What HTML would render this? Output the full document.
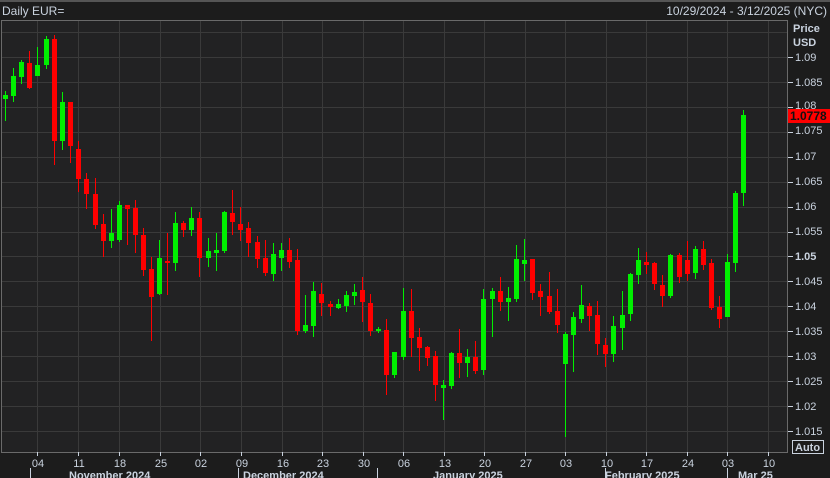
<!DOCTYPE html>
<html><head><meta charset="utf-8"><style>
html,body{margin:0;padding:0;background:#1c1c1c;width:830px;height:478px;overflow:hidden}
svg{display:block;font-family:"Liberation Sans",sans-serif}
</style></head><body>
<svg width="830" height="478" viewBox="0 0 830 478" xmlns="http://www.w3.org/2000/svg">
<rect x="0" y="0" width="830" height="478" fill="#1c1c1c"/>
<rect x="0" y="0" width="830" height="2" fill="#555"/>
<text x="2" y="15" font-size="12" fill="#c9d2de">Daily EUR=</text>
<text x="827" y="15" font-size="12" fill="#c9d2de" text-anchor="end">10/29/2024 - 3/12/2025 (NYC)</text>
<rect x="1.5" y="20.5" width="786" height="432" fill="#222223" stroke="#6a6a6a"/>
<g stroke="#3a3a3a" stroke-width="1">
<line x1="2" x2="787" y1="32.5" y2="32.5"/><line x1="2" x2="787" y1="57.5" y2="57.5"/><line x1="2" x2="787" y1="82.5" y2="82.5"/><line x1="2" x2="787" y1="107.5" y2="107.5"/><line x1="2" x2="787" y1="132.5" y2="132.5"/><line x1="2" x2="787" y1="157.5" y2="157.5"/><line x1="2" x2="787" y1="182.5" y2="182.5"/><line x1="2" x2="787" y1="207.5" y2="207.5"/><line x1="2" x2="787" y1="232.5" y2="232.5"/><line x1="2" x2="787" y1="256.5" y2="256.5"/><line x1="2" x2="787" y1="281.5" y2="281.5"/><line x1="2" x2="787" y1="306.5" y2="306.5"/><line x1="2" x2="787" y1="331.5" y2="331.5"/><line x1="2" x2="787" y1="356.5" y2="356.5"/><line x1="2" x2="787" y1="381.5" y2="381.5"/><line x1="2" x2="787" y1="406.5" y2="406.5"/><line x1="2" x2="787" y1="431.5" y2="431.5"/>
<line y1="21" y2="452" x1="37.5" x2="37.5"/><line y1="21" y2="452" x1="78.5" x2="78.5"/><line y1="21" y2="452" x1="119.5" x2="119.5"/><line y1="21" y2="452" x1="160.5" x2="160.5"/><line y1="21" y2="452" x1="200.5" x2="200.5"/><line y1="21" y2="452" x1="241.5" x2="241.5"/><line y1="21" y2="452" x1="282.5" x2="282.5"/><line y1="21" y2="452" x1="322.5" x2="322.5"/><line y1="21" y2="452" x1="363.5" x2="363.5"/><line y1="21" y2="452" x1="403.5" x2="403.5"/><line y1="21" y2="452" x1="444.5" x2="444.5"/><line y1="21" y2="452" x1="484.5" x2="484.5"/><line y1="21" y2="452" x1="525.5" x2="525.5"/><line y1="21" y2="452" x1="565.5" x2="565.5"/><line y1="21" y2="452" x1="606.5" x2="606.5"/><line y1="21" y2="452" x1="646.5" x2="646.5"/><line y1="21" y2="452" x1="687.5" x2="687.5"/><line y1="21" y2="452" x1="727.5" x2="727.5"/><line y1="21" y2="452" x1="768.5" x2="768.5"/>
</g>
<g fill="#00f000">
<rect x="5" y="91" width="1" height="30"/><rect x="3" y="95" width="5" height="4"/>
<rect x="13" y="68" width="1" height="34"/><rect x="11" y="76" width="5" height="20"/>
<rect x="21" y="60" width="1" height="24"/><rect x="19" y="62" width="5" height="15"/>
<rect x="37" y="47" width="1" height="29"/><rect x="35" y="65" width="5" height="11"/>
<rect x="46" y="36" width="1" height="33"/><rect x="44" y="39" width="5" height="26"/>
<rect x="62" y="92" width="1" height="58"/><rect x="60" y="102" width="5" height="39"/>
<rect x="111" y="209" width="1" height="39"/><rect x="109" y="233" width="5" height="8"/>
<rect x="119" y="201" width="1" height="41"/><rect x="117" y="205" width="5" height="35"/>
<rect x="159" y="240" width="1" height="55"/><rect x="157" y="258" width="5" height="36"/>
<rect x="175" y="212" width="1" height="59"/><rect x="173" y="223" width="5" height="40"/>
<rect x="191" y="207" width="1" height="29"/><rect x="189" y="218" width="5" height="12"/>
<rect x="208" y="238" width="1" height="29"/><rect x="206" y="251" width="5" height="7"/>
<rect x="216" y="233" width="1" height="38"/><rect x="214" y="250" width="5" height="3"/>
<rect x="224" y="211" width="1" height="42"/><rect x="222" y="212" width="5" height="39"/>
<rect x="273" y="243" width="1" height="38"/><rect x="271" y="254" width="5" height="20"/>
<rect x="281" y="243" width="1" height="28"/><rect x="279" y="250" width="5" height="8"/>
<rect x="305" y="295" width="1" height="38"/><rect x="303" y="325" width="5" height="6"/>
<rect x="313" y="282" width="1" height="55"/><rect x="311" y="291" width="5" height="35"/>
<rect x="338" y="299" width="1" height="10"/><rect x="336" y="304" width="5" height="4"/>
<rect x="346" y="291" width="1" height="21"/><rect x="344" y="295" width="5" height="11"/>
<rect x="354" y="284" width="1" height="21"/><rect x="352" y="292" width="5" height="4"/>
<rect x="378" y="327" width="1" height="6"/><rect x="376" y="329" width="5" height="2"/>
<rect x="394" y="352" width="1" height="26"/><rect x="392" y="352" width="5" height="23"/>
<rect x="403" y="288" width="1" height="72"/><rect x="401" y="311" width="5" height="46"/>
<rect x="443" y="380" width="1" height="40"/><rect x="441" y="385" width="5" height="3"/>
<rect x="451" y="352" width="1" height="37"/><rect x="449" y="353" width="5" height="33"/>
<rect x="467" y="349" width="1" height="28"/><rect x="465" y="357" width="5" height="6"/>
<rect x="483" y="289" width="1" height="86"/><rect x="481" y="299" width="5" height="71"/>
<rect x="492" y="288" width="1" height="49"/><rect x="490" y="291" width="5" height="8"/>
<rect x="508" y="287" width="1" height="34"/><rect x="506" y="298" width="5" height="4"/>
<rect x="516" y="245" width="1" height="57"/><rect x="514" y="259" width="5" height="40"/>
<rect x="524" y="239" width="1" height="42"/><rect x="522" y="260" width="5" height="4"/>
<rect x="565" y="332" width="1" height="105"/><rect x="563" y="334" width="5" height="30"/>
<rect x="573" y="312" width="1" height="60"/><rect x="571" y="317" width="5" height="18"/>
<rect x="581" y="285" width="1" height="38"/><rect x="579" y="305" width="5" height="14"/>
<rect x="613" y="316" width="1" height="46"/><rect x="611" y="326" width="5" height="28"/>
<rect x="622" y="291" width="1" height="59"/><rect x="620" y="315" width="5" height="13"/>
<rect x="630" y="273" width="1" height="48"/><rect x="628" y="274" width="5" height="40"/>
<rect x="638" y="248" width="1" height="36"/><rect x="636" y="260" width="5" height="15"/>
<rect x="670" y="254" width="1" height="44"/><rect x="668" y="255" width="5" height="41"/>
<rect x="695" y="246" width="1" height="33"/><rect x="693" y="249" width="5" height="24"/>
<rect x="727" y="254" width="1" height="63"/><rect x="725" y="262" width="5" height="55"/>
<rect x="735" y="191" width="1" height="81"/><rect x="733" y="193" width="5" height="70"/>
<rect x="743" y="110" width="1" height="96"/><rect x="741" y="115" width="5" height="78"/>
</g>
<g fill="#ff0000">
<rect x="29" y="51" width="1" height="38"/><rect x="27" y="63" width="5" height="25"/>
<rect x="54" y="35" width="1" height="130"/><rect x="52" y="39" width="5" height="102"/>
<rect x="70" y="102" width="1" height="61"/><rect x="68" y="102" width="5" height="44"/>
<rect x="78" y="141" width="1" height="51"/><rect x="76" y="149" width="5" height="30"/>
<rect x="86" y="173" width="1" height="36"/><rect x="84" y="179" width="5" height="15"/>
<rect x="95" y="178" width="1" height="51"/><rect x="93" y="194" width="5" height="31"/>
<rect x="103" y="214" width="1" height="43"/><rect x="101" y="224" width="5" height="17"/>
<rect x="127" y="205" width="1" height="40"/><rect x="125" y="205" width="5" height="4"/>
<rect x="135" y="200" width="1" height="53"/><rect x="133" y="208" width="5" height="27"/>
<rect x="143" y="228" width="1" height="48"/><rect x="141" y="235" width="5" height="35"/>
<rect x="151" y="257" width="1" height="84"/><rect x="149" y="269" width="5" height="28"/>
<rect x="167" y="233" width="1" height="62"/><rect x="165" y="261" width="5" height="2"/>
<rect x="183" y="221" width="1" height="16"/><rect x="181" y="223" width="5" height="7"/>
<rect x="199" y="212" width="1" height="65"/><rect x="197" y="218" width="5" height="40"/>
<rect x="232" y="190" width="1" height="45"/><rect x="230" y="213" width="5" height="9"/>
<rect x="240" y="207" width="1" height="34"/><rect x="238" y="224" width="5" height="6"/>
<rect x="248" y="222" width="1" height="35"/><rect x="246" y="228" width="5" height="15"/>
<rect x="257" y="236" width="1" height="32"/><rect x="255" y="242" width="5" height="17"/>
<rect x="265" y="240" width="1" height="36"/><rect x="263" y="258" width="5" height="15"/>
<rect x="289" y="238" width="1" height="30"/><rect x="287" y="250" width="5" height="12"/>
<rect x="297" y="249" width="1" height="86"/><rect x="295" y="260" width="5" height="71"/>
<rect x="321" y="283" width="1" height="33"/><rect x="319" y="294" width="5" height="9"/>
<rect x="330" y="301" width="1" height="15"/><rect x="328" y="304" width="5" height="3"/>
<rect x="362" y="277" width="1" height="45"/><rect x="360" y="290" width="5" height="12"/>
<rect x="370" y="294" width="1" height="42"/><rect x="368" y="303" width="5" height="28"/>
<rect x="386" y="319" width="1" height="76"/><rect x="384" y="330" width="5" height="45"/>
<rect x="411" y="289" width="1" height="68"/><rect x="409" y="311" width="5" height="27"/>
<rect x="419" y="328" width="1" height="43"/><rect x="417" y="337" width="5" height="11"/>
<rect x="427" y="346" width="1" height="20"/><rect x="425" y="347" width="5" height="11"/>
<rect x="435" y="351" width="1" height="50"/><rect x="433" y="356" width="5" height="29"/>
<rect x="459" y="329" width="1" height="49"/><rect x="457" y="353" width="5" height="10"/>
<rect x="475" y="341" width="1" height="33"/><rect x="473" y="357" width="5" height="14"/>
<rect x="500" y="277" width="1" height="34"/><rect x="498" y="291" width="5" height="11"/>
<rect x="532" y="259" width="1" height="41"/><rect x="530" y="259" width="5" height="34"/>
<rect x="540" y="284" width="1" height="32"/><rect x="538" y="291" width="5" height="6"/>
<rect x="549" y="272" width="1" height="42"/><rect x="547" y="296" width="5" height="16"/>
<rect x="557" y="289" width="1" height="44"/><rect x="555" y="311" width="5" height="14"/>
<rect x="589" y="303" width="1" height="28"/><rect x="587" y="306" width="5" height="10"/>
<rect x="597" y="301" width="1" height="54"/><rect x="595" y="315" width="5" height="29"/>
<rect x="605" y="338" width="1" height="29"/><rect x="603" y="345" width="5" height="9"/>
<rect x="646" y="252" width="1" height="22"/><rect x="644" y="262" width="5" height="3"/>
<rect x="654" y="262" width="1" height="28"/><rect x="652" y="263" width="5" height="21"/>
<rect x="662" y="275" width="1" height="32"/><rect x="660" y="285" width="5" height="11"/>
<rect x="679" y="253" width="1" height="30"/><rect x="677" y="255" width="5" height="22"/>
<rect x="687" y="241" width="1" height="40"/><rect x="685" y="260" width="5" height="14"/>
<rect x="703" y="241" width="1" height="29"/><rect x="701" y="249" width="5" height="16"/>
<rect x="711" y="259" width="1" height="51"/><rect x="709" y="263" width="5" height="45"/>
<rect x="719" y="296" width="1" height="32"/><rect x="717" y="307" width="5" height="12"/>
</g>
<g fill="#c9d2de" font-size="11">
<text x="793" y="32" font-weight="bold">Price</text>
<text x="793" y="46" font-weight="bold">USD</text>
<g stroke="#c9d2de"><line x1="788" x2="793" y1="57.5" y2="57.5"/><line x1="788" x2="793" y1="82.5" y2="82.5"/><line x1="788" x2="793" y1="107.5" y2="107.5"/><line x1="788" x2="793" y1="132.5" y2="132.5"/><line x1="788" x2="793" y1="157.5" y2="157.5"/><line x1="788" x2="793" y1="182.5" y2="182.5"/><line x1="788" x2="793" y1="207.5" y2="207.5"/><line x1="788" x2="793" y1="232.5" y2="232.5"/><line x1="788" x2="793" y1="256.5" y2="256.5"/><line x1="788" x2="793" y1="281.5" y2="281.5"/><line x1="788" x2="793" y1="306.5" y2="306.5"/><line x1="788" x2="793" y1="331.5" y2="331.5"/><line x1="788" x2="793" y1="356.5" y2="356.5"/><line x1="788" x2="793" y1="381.5" y2="381.5"/><line x1="788" x2="793" y1="406.5" y2="406.5"/><line x1="788" x2="793" y1="431.5" y2="431.5"/></g>
<text x="795" y="61">1.09</text><text x="795" y="86">1.085</text><text x="795" y="109">1.08</text><text x="795" y="134">1.075</text><text x="795" y="160">1.07</text><text x="795" y="185">1.065</text><text x="795" y="210">1.06</text><text x="795" y="235">1.055</text><text x="795" y="260" font-weight="bold">1.05</text><text x="795" y="285">1.045</text><text x="795" y="310">1.04</text><text x="795" y="335">1.035</text><text x="795" y="360">1.03</text><text x="795" y="385">1.025</text><text x="795" y="410">1.02</text><text x="795" y="435">1.015</text>
</g>
<rect x="788" y="109" width="42" height="14" fill="#ff0000"/>
<text x="790" y="120" font-size="12" font-weight="bold" fill="#111">1.0778</text>
<rect x="792.5" y="440.5" width="31" height="13" fill="#1c1c1c" stroke="#c9d2de"/>
<text x="795" y="451" font-size="11" font-weight="bold" fill="#c9d2de">Auto</text>
<g stroke="#c9d2de">
<line x1="37.5" x2="37.5" y1="452" y2="456"/><line x1="78.5" x2="78.5" y1="452" y2="456"/><line x1="119.5" x2="119.5" y1="452" y2="456"/><line x1="160.5" x2="160.5" y1="452" y2="456"/><line x1="200.5" x2="200.5" y1="452" y2="456"/><line x1="241.5" x2="241.5" y1="452" y2="456"/><line x1="282.5" x2="282.5" y1="452" y2="456"/><line x1="322.5" x2="322.5" y1="452" y2="456"/><line x1="363.5" x2="363.5" y1="452" y2="456"/><line x1="403.5" x2="403.5" y1="452" y2="456"/><line x1="444.5" x2="444.5" y1="452" y2="456"/><line x1="484.5" x2="484.5" y1="452" y2="456"/><line x1="525.5" x2="525.5" y1="452" y2="456"/><line x1="565.5" x2="565.5" y1="452" y2="456"/><line x1="606.5" x2="606.5" y1="452" y2="456"/><line x1="646.5" x2="646.5" y1="452" y2="456"/><line x1="687.5" x2="687.5" y1="452" y2="456"/><line x1="727.5" x2="727.5" y1="452" y2="456"/><line x1="768.5" x2="768.5" y1="452" y2="456"/>
<line x1="30.5" x2="30.5" y1="468" y2="478"/><line x1="238.5" x2="238.5" y1="468" y2="478"/><line x1="377.5" x2="377.5" y1="468" y2="478"/><line x1="605.5" x2="605.5" y1="468" y2="478"/><line x1="727.5" x2="727.5" y1="468" y2="478"/>
</g>
<g fill="#c9d2de" font-size="11" text-anchor="middle">
<text x="38" y="467">04</text><text x="79" y="467">11</text><text x="120" y="467">18</text><text x="161" y="467">25</text><text x="201" y="467">02</text><text x="242" y="467">09</text><text x="283" y="467">16</text><text x="323" y="467">23</text><text x="364" y="467">30</text><text x="404" y="467">06</text><text x="445" y="467">13</text><text x="485" y="467">20</text><text x="526" y="467">27</text><text x="566" y="467">03</text><text x="607" y="467">10</text><text x="647" y="467">17</text><text x="688" y="467">24</text><text x="728" y="467">03</text><text x="769" y="467">10</text>
</g>
<g fill="#c9d2de" font-size="11" font-weight="bold">
<text x="69" y="479">November 2024</text><text x="243" y="479">December 2024</text><text x="433" y="479">January 2025</text><text x="605" y="479">February 2025</text><text x="738" y="479">Mar 25</text>
</g>
</svg>
</body></html>
